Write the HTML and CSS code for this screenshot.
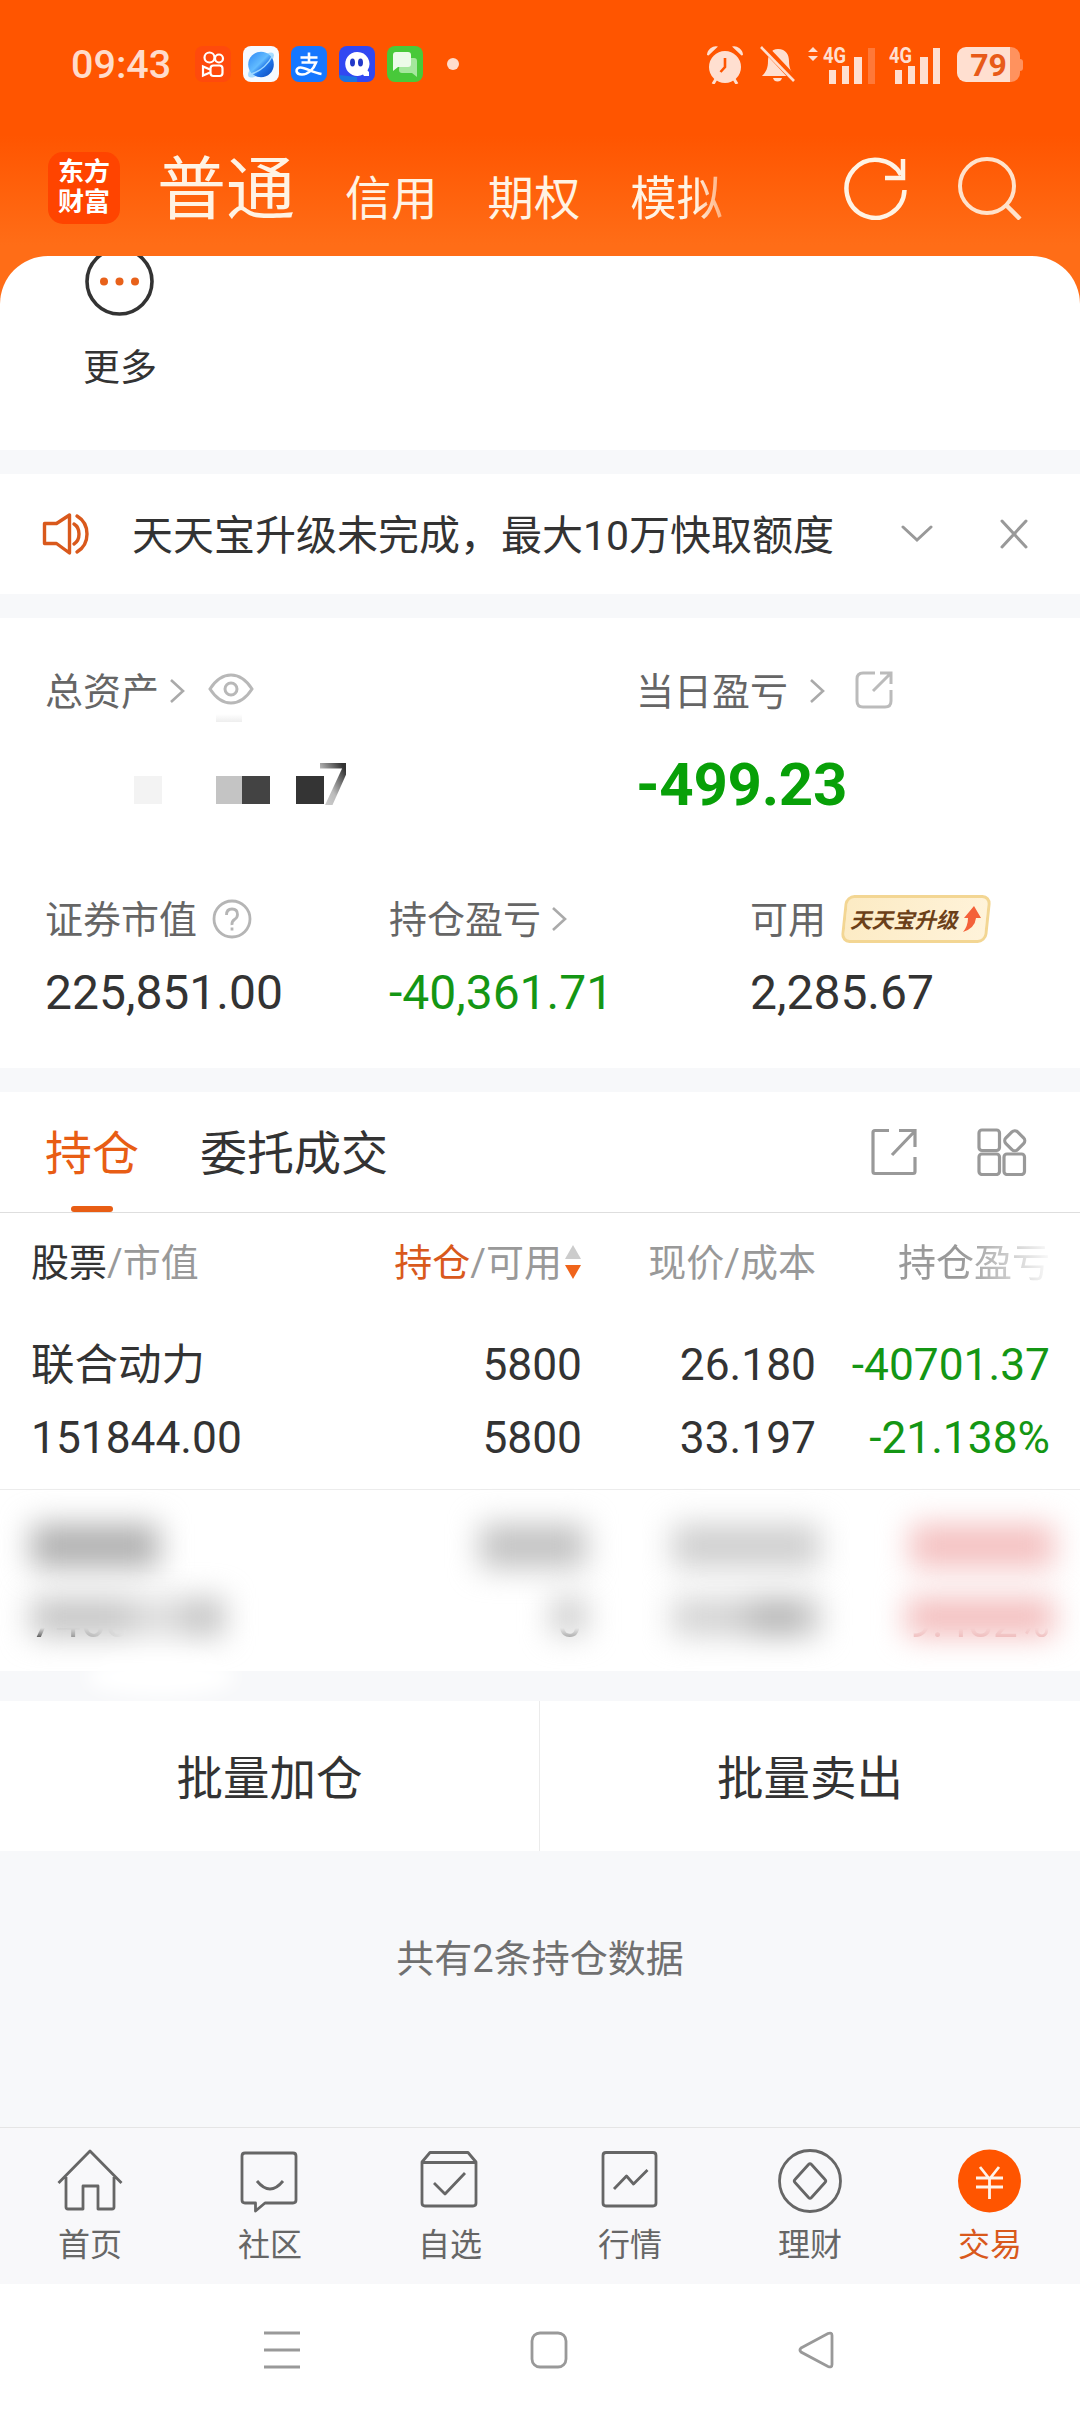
FILE: index.html
```html
<!DOCTYPE html>
<html lang="zh-CN">

<head>
    <meta charset="UTF-8">
    <meta name="viewport" content="width=device-width, initial-scale=1.0">
    <title>交易</title>
    <link rel="stylesheet" href="styles.css">
</head>

<body>
    <!-- 顶部 -->
    <header class="topo">
        <div class="status-bar">
            <span class="hora">09:43</span>
            <div class="apps">
                <svg width="36" height="36" viewBox="0 0 36 36">
                    <rect width="36" height="36" rx="8" fill="#ff4a0c"/>
                    <g fill="none" stroke="#fff" stroke-width="2.2">
                        <circle cx="14.5" cy="11.5" r="5"/>
                        <circle cx="24" cy="12.5" r="4"/>
                        <rect x="15.5" y="19.5" width="12" height="10.5" rx="3"/>
                        <path d="M15 23.5l-7-3v9l7-3"/>
                    </g>
                </svg>
                <svg width="36" height="36" viewBox="0 0 36 36">
                    <defs>
                        <linearGradient id="planeta" x1="0" y1="0" x2="1" y2="1">
                            <stop offset="0" stop-color="#2c86f5"/>
                            <stop offset=".45" stop-color="#62bcff"/>
                            <stop offset=".62" stop-color="#1f74e8"/>
                            <stop offset="1" stop-color="#0b46b8"/>
                        </linearGradient>
                    </defs>
                    <rect width="36" height="36" rx="8" fill="#f6faff"/>
                    <ellipse cx="18" cy="19" rx="17" ry="6" transform="rotate(-44 18 19)" fill="#a9dcff"/>
                    <circle cx="18" cy="18.5" r="12.8" fill="url(#planeta)"/>
                    <path d="M8 28Q22 24 30 9" fill="none" stroke="#9bd6ff" stroke-width="1.5"/>
                </svg>
                <svg width="36" height="36" viewBox="0 0 36 36">
                    <rect width="36" height="36" rx="8" fill="#1677ff"/>
                    <path d="M9.5 11.5h17M18 6.5v10M10.5 16.5h14.5c-2.500 7-8 12-14 12c-7 0-7-7-1.500-7c5 0 12 5 21 6.500" fill="none" stroke="#fff" stroke-width="2.6"/>
                </svg>
                <svg width="36" height="36" viewBox="0 0 36 36">
                    <rect width="36" height="36" rx="8" fill="#3148f2"/>
                    <path d="M0 29l18 2v5H8q-8 0-8-7z" fill="#1b74e0"/>
                    <path d="M18 6a12 12 0 1 0 6 22.500l1 1.500h5v-4l-1.500-1.500A12 12 0 0 0 18 6z" fill="#fff"/>
                    <ellipse cx="13.5" cy="16.5" rx="2.5" ry="4" fill="#2138c8"/>
                    <ellipse cx="21.5" cy="16.5" rx="2.5" ry="4" fill="#2138c8"/>
                </svg>
                <svg width="36" height="36" viewBox="0 0 36 36">
                    <rect width="36" height="36" rx="8" fill="#48c93a"/>
                    <path d="M13 12h14q3 0 3 3v16l-5-4H15q-3 0-3-3z" fill="#a5e79d"/>
                    <path d="M9 6h12q3 0 3 3v9q0 3-3 3H11l-5 4V9q0-3 3-3z" fill="#ecfbe9"/>
                </svg>
            </div>
            <span class="ponto"></span>
            <div class="sinais">
                <svg width="38" height="40" viewBox="0 0 38 40">
                    <g fill="#ffdfd0">
                        <circle cx="19" cy="23" r="16"/>
                        <path d="M1 11A9 9 0 0 1 12 2.500L2.500 11.500zM37 11A9 9 0 0 0 26 2.500L35.500 11.500z"/>
                    </g>
                    <path d="M10 35l-3 5M28 35l3 5" stroke="#ffdfd0" stroke-width="3"/>
                    <path d="M19 14v9l-4.500 5" fill="none" stroke="#ff5500" stroke-width="2.6"/>
                </svg>
                <svg width="36" height="40" viewBox="0 0 36 40" class="sino">
                    <path d="M18 5c8 0 11 6 11 12 0 7 2 11 6 15H2c4-4 6-8 6-15C8 11 11 5 18 5zM13 34h9q-1 3.500-4.500 3.500T13 34z" fill="#ffdfd0"/>
                    <path d="M2 1l33 35" stroke="#ff5500" stroke-width="7"/>
                    <path d="M1 3l33 34" stroke="#ffdfd0" stroke-width="2.6"/>
                </svg>
                <svg width="68" height="40" viewBox="0 0 68 40" class="rede">
                    <path d="M0 8l5-5 5 5zM0 12h10l-5 5z" fill="#ffdfd0"/>
                    <text x="15" y="19" textLength="23" lengthAdjust="spacingAndGlyphs">4G</text>
                    <path d="M21 26h7v14h-7zM34 22h7v18h-7zM46 13h8v27h-8z" fill="#ffdfd0"/>
                    <path d="M60 4h7v36h-7z" fill="#ff7838"/>
                </svg>
                <svg width="52" height="40" viewBox="0 0 52 40" class="rede">
                    <text x="0" y="19" textLength="23" lengthAdjust="spacingAndGlyphs">4G</text>
                    <path d="M6 26h7v14H6zM19 22h7v18h-7zM31 13h8v27h-8zM44 4h7v36h-7z" fill="#ffdfd0"/>
                </svg>
                <div class="bateria">79</div>
            </div>
        </div>
        <nav class="menu">
            <div class="logo">东方<br>财富</div>
            <a class="ativo">普通</a>
            <a>信用</a>
            <a>期权</a>
            <a class="sumindo">模拟</a>
            <div class="menu-icones">
                <svg width="64" height="64" viewBox="0 0 64 64">
                    <path d="M60.5 34A29 29 0 1 1 57 19" fill="none" stroke="#fff3e4" stroke-width="4.5"/>
                    <path d="M59 3v19H41" fill="none" stroke="#fff3e4" stroke-width="4.5"/>
                </svg>
                <svg width="64" height="64" viewBox="0 0 64 64">
                    <circle cx="29" cy="30" r="27" fill="none" stroke="#ffe2cb" stroke-width="4"/>
                    <path d="M48 49l14 14" stroke="#ffe2cb" stroke-width="4.5"/>
                </svg>
            </div>
        </nav>
    </header>

    <section class="mais">
        <div class="mais-item">
            <svg width="70" height="61" viewBox="0 0 70 61">
                <circle cx="35.5" cy="25.5" r="32.5" fill="none" stroke="#333" stroke-width="3.6"/>
                <g fill="#e8611a">
                    <circle cx="20" cy="25.5" r="4"/>
                    <circle cx="35.5" cy="25.5" r="4"/>
                    <circle cx="51" cy="25.5" r="4"/>
                </g>
            </svg>
            <span>更多</span>
        </div>
    </section>

    <!-- 公告 -->
    <section class="aviso">
        <svg width="48" height="44" viewBox="0 0 48 44" fill="none" stroke="#d9591c" stroke-width="3.4" stroke-linejoin="round" stroke-linecap="round">
            <path d="M2.5 11.5h12L27.5 3v38l-13-9.500h-12z"/>
            <path d="M32 12q5 3 5 10t-5 10M35 4q10 6 10 18t-10 18"/>
        </svg>
        <p>天天宝升级未完成，最大10万快取额度</p>
        <svg class="seta-baixo" width="32" height="18" viewBox="0 0 32 18" fill="none" stroke="#999" stroke-width="3" stroke-linecap="round"><path d="M2 2l14 13L30 2"/></svg>
        <svg width="28" height="30" viewBox="0 0 28 30" fill="none" stroke="#999" stroke-width="3" stroke-linecap="round"><path d="M2 2l24 26M26 2L2 28"/></svg>
    </section>

    <!-- 资产 -->
    <section class="ativos">
        <div class="linha-total">
            <div class="bloco">
                <div class="rotulo"><span>总资产</span>
                    <svg class="seta" width="16" height="26" viewBox="0 0 16 26"><path d="M2 2l12 11L2 24"/></svg>
                    <svg class="olho" width="46" height="32" viewBox="0 0 46 32" fill="none" stroke="#b8b8b8" stroke-width="3">
                        <path d="M2 16Q11 2 23 2t21 14Q35 30 23 30T2 16z"/>
                        <circle cx="23" cy="16" r="6"/>
                    </svg>
                    <i class="borrao"></i>
                </div>
                <div class="mosaico">
                    <i class="m1"></i><i class="m2"></i><i class="m3"></i><i class="m4"></i><b>7</b>
                </div>
            </div>
            <div class="bloco">
                <div class="rotulo"><span>当日盈亏</span>
                    <svg class="seta longe" width="16" height="26" viewBox="0 0 16 26"><path d="M2 2l12 11L2 24"/></svg>
                    <svg class="abrir" width="38" height="38" viewBox="0 0 38 38" fill="none" stroke="#bbb" stroke-width="3">
                        <path d="M20 2H8Q2 2 2 8v22q0 6 6 6h22q6 0 6-6V19M25 2h11v11M35 3L18 20"/>
                    </svg>
                </div>
                <div class="valor-grande">-499.23</div>
            </div>
        </div>
        <div class="linha-valores">
            <div>
                <div class="rotulo"><span>证券市值</span>
                    <svg class="ajuda" width="40" height="40" viewBox="0 0 40 40" fill="none" stroke="#b5b5b5" stroke-width="2.8">
                        <circle cx="20" cy="20" r="18"/>
                        <path d="M14.5 16q0-6 5.500-6t5.500 5.500q0 3-3 5T20 26"/>
                        <path d="M20 28.5v3"/>
                    </svg>
                </div>
                <div class="valor">225,851.00</div>
            </div>
            <div>
                <div class="rotulo"><span>持仓盈亏</span>
                    <svg class="seta" width="16" height="26" viewBox="0 0 16 26"><path d="M2 2l12 11L2 24"/></svg>
                </div>
                <div class="valor verde">-40,361.71</div>
            </div>
            <div>
                <div class="rotulo"><span>可用</span>
                    <div class="selo">天天宝升级<svg width="18" height="26" viewBox="0 0 18 26"><path d="M11 0l7 12h-5Q12 22 0 26q5-6 5-14H1z" fill="#f4613a"/></svg></div>
                </div>
                <div class="valor">2,285.67</div>
            </div>
        </div>
    </section>

    <!-- 持仓 -->
    <section class="posicoes">
        <div class="abas">
            <a class="aba ativa">持仓</a>
            <a class="aba">委托成交</a>
            <div class="abas-icones">
                <svg width="46" height="48" viewBox="0 0 46 48" fill="none" stroke="#999" stroke-width="3.2">
                    <path d="M18 2.500H4q-2 0-2 2v39q0 2 2 2h38q2 0 2-2V29M28 2.500h16V19M43 4L21 27"/>
                </svg>
                <svg width="50" height="48" viewBox="0 0 50 48" fill="none" stroke="#999" stroke-width="3.2">
                    <rect x="2" y="2" width="20.5" height="20.5" rx="3"/>
                    <rect x="2" y="26" width="20.5" height="20.5" rx="3"/>
                    <rect x="27" y="26" width="20.5" height="20.5" rx="3"/>
                    <rect x="29.5" y="4.500" width="16.500" height="16.500" rx="4" transform="rotate(45 37.75 12.75)"/>
                </svg>
            </div>
        </div>
        <div class="tabela cabecalho">
            <span><b>股票</b>/市值</span>
            <span class="ordem"><em>持仓</em>/可用<svg width="16" height="36" viewBox="0 0 16 36"><path d="M0 15L8 1l8 14z" fill="#ccc"/><path d="M0 21h16L8 35z" fill="#f0641a"/></svg></span>
            <span>现价/成本</span>
            <span class="apagando">持仓盈亏</span>
        </div>
        <div class="tabela acao">
            <span>联合动力</span><span>5800</span><span>26.180</span><span class="verde">-40701.37</span>
            <span>151844.00</span><span>5800</span><span>33.197</span><span class="verde">-21.138%</span>
        </div>
        <div class="tabela oculta">
            <span><i class="n1"></i></span><span><i class="n2"></i></span><span><i class="n3"></i></span><span><i class="n4"></i></span>
            <span><i class="n5"></i><u>7460</u></span><span><i class="n6"></i><u>0</u></span><span><i class="n7"></i></span><span><i class="n8"></i><u class="vermelho">9.482%</u></span>
            <i class="mancha"></i>
        </div>
    </section>

    <section class="lote">
        <button>批量加仓</button>
        <button>批量卖出</button>
    </section>

    <p class="total">共有2条持仓数据</p>

    <!-- 底部导航 -->
    <nav class="rodape">
        <a>
            <svg width="66" height="66" viewBox="0 0 66 66"><path d="M1.5 35L33 3l31.500 32M9 29v30q0 2 2 2h15V38h15v23h14q2 0 2-2V29"/></svg>
            首页
        </a>
        <a>
            <svg width="66" height="66" viewBox="0 0 66 66"><path d="M8 5h48q3 0 3 3v44q0 3-3 3H28l-9.500 8V55H8q-3 0-3-3V8q0-3 3-3zM20 33q13 16 26 0"/></svg>
            社区
        </a>
        <a>
            <svg width="66" height="66" viewBox="0 0 66 66"><path d="M5 14l8-9.500h38L59 14v41q0 3-3 3H8q-3 0-3-3zM5 14.500h54M17 35l11 11 20-21"/></svg>
            自选
        </a>
        <a>
            <svg width="66" height="66" viewBox="0 0 66 66"><path d="M9 4.500h47q3 0 3 3V55q0 3-3 3H9q-3 0-3-3V7.500q0-3 3-3zM17 41l12.500-13 7 8L50.500 22"/></svg>
            行情
        </a>
        <a>
            <svg width="66" height="66" viewBox="0 0 66 66"><circle cx="33" cy="33" r="30.5"/><path d="M31.5 16.500q1.500-1.500 3 0l13.500 15q1.500 1.500 0 3l-13.500 15q-1.500 1.500-3 0l-13.500-15q-1.500-1.500 0-3z"/></svg>
            理财
        </a>
        <a class="ativo">
            <svg width="66" height="66" viewBox="0 0 66 66"><circle cx="32.5" cy="33" r="31.5" fill="#ff5500" stroke="none"/><path d="M23 19l9.500 12 9.500-12M19 30h27M19 39h27M32.5 30v21" stroke="#fff3ea"/></svg>
            交易
        </a>
    </nav>

    <div class="sistema">
        <svg width="36" height="38" viewBox="0 0 36 38"><path d="M0 2h36M0 19h36M0 36h36"/></svg>
        <svg width="38" height="38" viewBox="0 0 38 38"><rect x="2" y="2" width="34" height="34" rx="8"/></svg>
        <svg width="36" height="38" viewBox="0 0 36 38"><path d="M3 17L30 2.500q4-1.500 4 2v29q0 3.500-4 2L3 21q-2-2 0-4z"/></svg>
    </div>
</body>

</html>
```
FILE: styles.css
```css
*{
    padding: 0;
    margin: 0;
    box-sizing: border-box;
}

body{
    width: 1080px;
    height: 2416px;
    overflow: hidden;
    background-color: #f7f8fa;
    color: #333;
    font-family: Roboto, "Noto Sans CJK SC", sans-serif;
}

svg{
    display: block;
    flex-shrink: 0;
}

i, em, u{
    font-style: normal;
    text-decoration: none;
}

/* topo */
.topo{
    height: 304px;
    background: linear-gradient(#ff5500 0, #ff5500 135px, #ff6d17 245px, #ff6d17 100%);
}

.status-bar{
    display: flex;
    align-items: center;
    height: 128px;
    padding: 0 60px 0 71px;
}

.hora{
    width: 124px;
    font-size: 39.5px;
    font-weight: 500;
    color: #ffdccb;
}

.apps{
    display: flex;
    gap: 12px;
}

.ponto{
    width: 12px;
    height: 12px;
    margin-left: 24px;
    border-radius: 50%;
    background-color: #ffdccb;
}

.sinais{
    display: flex;
    align-items: center;
    margin-left: auto;
}

.sino{
    margin: 0 12px 0 16px;
}

.rede{
    margin-right: 13px;
}

.rede text{
    font-size: 22px;
    font-weight: 700;
    fill: #ffdfd0;
}

.bateria{
    position: relative;
    width: 63px;
    height: 35px;
    margin-left: 3px;
    border-radius: 9px;
    background: linear-gradient(90deg, #ffdfd0 53px, #ff925e 53px);
    color: #e85a18;
    font-size: 32px;
    font-weight: 700;
    line-height: 37px;
    text-align: center;
}

.bateria::after{
    content: "";
    position: absolute;
    right: -3px;
    top: 12px;
    width: 3px;
    height: 12px;
    border-radius: 0 3px 3px 0;
    background-color: #ff925e;
}

.menu{
    display: flex;
    align-items: flex-start;
    height: 128px;
    padding: 24px 58px 0 48px;
}

.logo{
    width: 72px;
    height: 72px;
    padding-top: 5px;
    margin-right: 37px;
    border-radius: 15px;
    background-color: #ff4400;
    color: #fff;
    font-size: 26px;
    font-weight: 700;
    line-height: 30px;
    text-align: center;
}

.menu a{
    margin-right: 50px;
    padding-top: 20px;
    font-size: 46.3px;
    line-height: 54px;
    color: #fff3e4;
}

.menu a.ativo{
    padding-top: 1px;
    font-size: 69px;
    line-height: 76px;
}

.menu a.sumindo{
    margin-right: 0;
    -webkit-mask-image: linear-gradient(90deg, #000 70%, rgba(0, 0, 0, 0.5));
    mask-image: linear-gradient(90deg, #000 70%, rgba(0, 0, 0, 0.5));
}

.menu-icones{
    display: flex;
    gap: 50px;
    margin-left: auto;
    padding-top: 4px;
}

/* mais */
.mais{
    height: 194px;
    margin-top: -48px;
    padding-left: 84px;
    border-radius: 48px 48px 0 0;
    background-color: #fff;
}

.mais-item{
    display: flex;
    flex-direction: column;
    width: 76px;
    font-size: 37px;
    line-height: 50px;
}

.mais-item span{
    margin: 27px 0 0 -1px;
}

.aviso{
    display: flex;
    align-items: center;
    height: 120px;
    margin-top: 24px;
    padding: 0 52px 0 42px;
    background-color: #fff;
    font-size: 41px;
}

.aviso p{
    margin-left: 42px;
    padding-bottom: 5px;
}

.seta-baixo{
    margin: 0 67px 0 auto;
}

/* ativos */
.ativos{
    height: 450px;
    margin: 24px 0;
    padding: 48px 0 0 45px;
    background-color: #fff;
}

.rotulo{
    display: flex;
    align-items: center;
    position: relative;
    height: 50px;
    font-size: 38px;
    color: #666;
}

.rotulo span{
    padding-bottom: 6px;
}

.seta{
    margin-left: 10px;
    fill: none;
    stroke: #aaa;
    stroke-width: 2.6;
}

.seta.longe{
    margin-left: 21px;
}

.olho{
    margin: -4px 0 0 23px;
}

.abrir{
    margin: -3px 0 0 30px;
}

.ajuda{
    margin-left: 15px;
}

.borrao{
    position: absolute;
    left: 171px;
    top: 48px;
    width: 26px;
    height: 8px;
    background: linear-gradient(#fff, #eee);
}

.linha-total{
    display: grid;
    grid-template-columns: 591px 1fr;
    height: 228px;
}

.mosaico{
    display: flex;
    align-items: center;
    margin-top: 38px;
    padding-left: 89px;
    height: 72px;
}

.mosaico i{
    width: 28px;
    height: 28px;
}

.m1{
    margin-right: 54px;
    background-color: #f3f3f3;
}

.mosaico .m2{
    width: 26px;
    background-color: #c4c4c4;
}

.m3{
    margin-right: 26px;
    background-color: #434343;
}

.m4{
    background-color: #343434;
}

.mosaico b{
    width: 28px;
    margin: -10px 0 0 -6px;
    font-size: 60px;
    font-weight: 500;
    line-height: 60px;
    background: linear-gradient(240deg, #333 15%, #bbb 55%, #ddd);
    -webkit-background-clip: text;
    background-clip: text;
    color: transparent;
}

.valor-grande{
    margin-top: 31px;
    font-size: 60px;
    font-weight: 700;
    line-height: 76px;
    letter-spacing: -0.3px;
    color: #08a008;
}

.linha-valores{
    display: grid;
    grid-template-columns: 344px 361px 1fr;
}

.valor{
    margin-top: 19px;
    font-size: 48px;
    line-height: 60px;
}

.verde,
.valor.verde{
    color: #149614;
}

.selo{
    display: flex;
    align-items: center;
    position: relative;
    z-index: 0;
    width: 150px;
    height: 50px;
    margin-left: 15px;
    padding: 0 0 1px 9px;
    color: #6b4019;
    font-size: 21.5px;
    font-style: italic;
    font-weight: 700;
    white-space: nowrap;
}

.selo::before{
    content: "";
    position: absolute;
    inset: 1px 2px;
    z-index: -1;
    border: 3px solid #f3d693;
    border-radius: 9px;
    background: linear-gradient(100deg, #fcebc4, #fff3da);
    transform: skewX(-6deg);
}

.selo svg{
    margin-left: 5px;
}

/* posições */
.posicoes{
    height: 579px;
    background-color: #fff;
}

.abas{
    display: flex;
    align-items: center;
    height: 121px;
    padding: 0 53px 0 45px;
    border-bottom: 1px solid #dedede;
}

.aba{
    position: relative;
    height: 120px;
    margin-right: 61px;
    font-size: 47px;
    line-height: 123px;
}

.aba.ativa{
    color: #e85d14;
}

.aba.ativa::after{
    content: "";
    position: absolute;
    left: 26px;
    bottom: 0;
    width: 42px;
    height: 6px;
    border-radius: 3px;
    background-color: #e85d14;
}

.abas-icones{
    display: flex;
    gap: 60px;
    margin-left: auto;
}

.tabela{
    display: grid;
    grid-template-columns: 1fr 266px 234px 234px;
    padding: 0 30px 0 31px;
    text-align: right;
    white-space: nowrap;
}

.tabela span:nth-child(4n+1){
    text-align: left;
}

.cabecalho{
    height: 114px;
    padding-top: 25px;
    font-size: 38px;
    line-height: 50px;
    color: #999;
}

.cabecalho b{
    color: #333;
    font-weight: 400;
}

.cabecalho em{
    color: #d9591c;
}

.ordem{
    display: flex;
    justify-content: flex-end;
    align-items: center;
    height: 50px;
}

.ordem svg{
    margin: -2px 1px 0 3px;
}

.apagando{
    -webkit-mask-image: linear-gradient(90deg, #000 62%, rgba(0, 0, 0, 0.05));
    mask-image: linear-gradient(90deg, #000 62%, rgba(0, 0, 0, 0.05));
}

.acao{
    height: 163px;
    padding-top: 2px;
    border-bottom: 1px solid #ececec;
    font-size: 44.3px;
    line-height: 73px;
    align-content: start;
}

.acao span:first-child{
    font-size: 43.5px;
}

/* linha escondida */
.oculta{
    position: relative;
    height: 181px;
    padding-top: 21px;
    grid-auto-rows: 74px;
    font-size: 44px;
    line-height: 74px;
}

.oculta span{
    position: relative;
}

.oculta i{
    position: absolute;
    right: -4px;
    top: 13px;
    height: 44px;
    background-color: #cbcbcb;
    filter: blur(15px);
}

.oculta .n1{
    left: 0;
    width: 128px;
    background-color: #b0b0b0;
}

.oculta .n2{
    width: 106px;
    background-color: #c2c2c2;
}

.oculta .n3{
    width: 148px;
    background-color: #cfcfcf;
}

.oculta .n4{
    width: 144px;
    background-color: #f4c0c0;
}

.oculta .n5{
    left: 0;
    width: 192px;
    height: 38px;
    background: linear-gradient(90deg, #c4c4c4 45%, #e2e2e2 65%, #b5b5b5);
}

.oculta .n6{
    width: 34px;
    height: 36px;
}

.oculta .n7{
    width: 148px;
    height: 38px;
    background: linear-gradient(90deg, #d3d3d3 40%, #aeaeae 70%, #cdcdcd);
}

.oculta .n8{
    width: 148px;
    height: 38px;
    background-color: #f3bcbc;
}

.oculta u{
    position: relative;
    display: inline-block;
    margin-top: -2px;
    color: #999;
    -webkit-mask-image: linear-gradient(transparent 58%, #000 74%);
    mask-image: linear-gradient(transparent 58%, #000 74%);
}

.oculta span:nth-child(5) u{
    background: linear-gradient(90deg, #222, #aaa 60%, #eee);
    -webkit-background-clip: text;
    background-clip: text;
    color: transparent;
}

.oculta .vermelho{
    color: #ecb4b4;
}

/* mancha clara sobre a faixa cinza */
.oculta .mancha{
    left: 86px;
    top: 168px;
    width: 150px;
    height: 38px;
    border-radius: 50%;
    background-color: #fff;
    filter: blur(9px);
}

.lote{
    display: grid;
    grid-template-columns: 1fr 1fr;
    height: 150px;
    margin-top: 30px;
    background-color: #fff;
}

.lote button{
    border: none;
    padding-bottom: 4px;
    background-color: transparent;
    color: #333;
    font-family: inherit;
    font-size: 46.5px;
}

.lote button:first-child{
    border-right: 1px solid #ebebeb;
}

.total{
    height: 276px;
    padding-top: 83px;
    font-size: 38px;
    line-height: 50px;
    text-align: center;
    color: #707070;
}

/* rodapé */
.rodape{
    display: grid;
    grid-template-columns: repeat(6, 1fr);
    height: 157px;
    padding-top: 20px;
    border-top: 1px solid #e5e5e5;
    background-color: #f8f8fa;
}

.rodape a{
    display: flex;
    flex-direction: column;
    align-items: center;
    gap: 10px;
    font-size: 32px;
    line-height: 42px;
    color: #666;
}

.rodape svg{
    fill: none;
    stroke: #666;
    stroke-width: 2.8;
    stroke-linejoin: round;
}

.rodape a.ativo{
    color: #d9591c;
}

.sistema{
    display: flex;
    align-items: center;
    gap: 230px;
    height: 132px;
    padding-left: 264px;
    background-color: #fff;
}

.sistema svg{
    fill: none;
    stroke: #999;
    stroke-width: 2.8;
}
```
